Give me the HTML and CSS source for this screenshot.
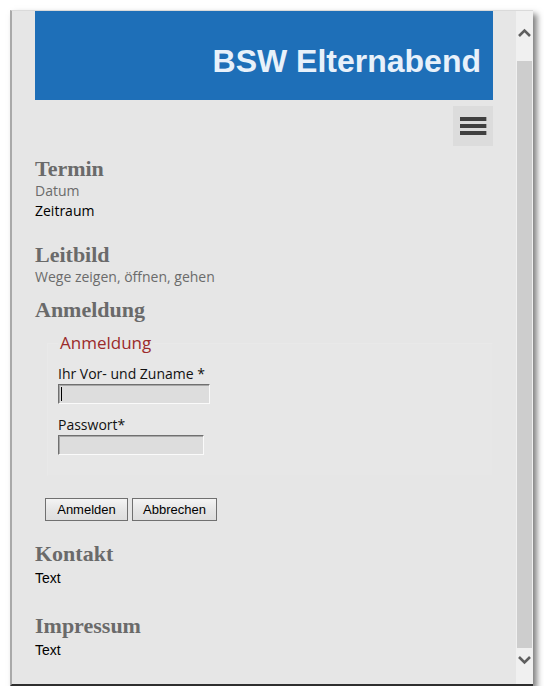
FILE: index.html
```html
<!DOCTYPE html>
<html lang="de">

<head>
    <meta charset="UTF-8">
    <meta name="viewport" content="width=device-width, initial-scale=1.0">
    <title>BSW Elternabend</title>
    <link rel="stylesheet" href="styles.css">
</head>

<body>
    <div class="window">
        <div class="viewport">
            <!-- Kopfbereich -->
            <header class="banner">
                <h1>BSW Elternabend</h1>
            </header>
            <div class="menu-row">
                <button class="menu-btn" aria-label="Menü"><span></span><span></span><span></span></button>
            </div>

            <section class="termin">
                <h2>Termin</h2>
                <p class="muted">Datum</p>
                <p>Zeitraum</p>
            </section>

            <section class="leitbild">
                <h2>Leitbild</h2>
                <p class="muted">Wege zeigen, öffnen, gehen</p>
            </section>

            <!-- Anmeldung -->
            <section class="anmeldung">
                <h2>Anmeldung</h2>
                <form class="login-form" onsubmit="return false">
                    <fieldset>
                        <legend>Anmeldung</legend>
                        <label for="name">Ihr Vor- und Zuname *</label>
                        <span class="field">
                            <input type="text" id="name" class="wide">
                            <i class="caret"></i>
                        </span>
                        <label for="pass" class="second">Passwort*</label>
                        <input type="password" id="pass" class="narrow">
                    </fieldset>
                    <div class="actions">
                        <button type="submit" class="btn btn-login">Anmelden</button>
                        <button type="reset" class="btn btn-cancel">Abbrechen</button>
                    </div>
                </form>
            </section>

            <section class="kontakt">
                <h2>Kontakt</h2>
                <p class="plain">Text</p>
            </section>

            <section class="impressum">
                <h2>Impressum</h2>
                <p class="plain">Text</p>
            </section>
        </div>

        <!-- Scrollleiste -->
        <div class="scrollbar">
            <div class="sb-btn">
                <svg width="17" height="17" viewBox="0 0 17 17"><path d="M3 12 L8.5 6.5 L14 12" fill="none" stroke="#5f5f5f" stroke-width="2.6"/></svg>
            </div>
            <div class="sb-thumb"></div>
            <div class="sb-btn sb-down">
                <svg width="17" height="17" viewBox="0 0 17 17"><path d="M3 5 L8.5 10.5 L14 5" fill="none" stroke="#5f5f5f" stroke-width="2.6"/></svg>
            </div>
        </div>
    </div>
</body>

</html>
```

FILE: styles.css
```css
body {
    margin: 0;
    background-color: #fff;
    font-family: "Open Sans", sans-serif;
}

.window {
    display: flex;
    width: 521px;
    height: 673px;
    margin: 10px 0 0 10px;
    border-left: 2px solid #a9a9a9;
    border-top: 1px solid #dadada;
    border-bottom: 2px solid #2e2e2e;
    box-shadow: 4px 4px 6px rgba(0, 0, 0, 0.5);
}

.viewport {
    flex: 1;
    overflow: hidden;
    background-color: #e6e6e6;
    padding: 0 23px;
}

.banner {
    height: 89px;
    box-sizing: border-box;
    background-color: #1e6fb8;
    padding: 32px 12px 0;
    text-align: right;
}

.banner h1 {
    margin: 0;
    font-family: "Liberation Sans", Arial, sans-serif;
    font-size: 32px;
    line-height: 36px;
    font-weight: bold;
    color: #e8f1fa;
}

.menu-row {
    display: flex;
    justify-content: flex-end;
    margin-top: 6px;
}

.menu-btn {
    width: 40px;
    height: 40px;
    padding: 0;
    border: none;
    background-color: #dcdcdc;
    display: flex;
    flex-direction: column;
    align-items: center;
    justify-content: center;
    gap: 3px;
}

.menu-btn span {
    display: block;
    width: 26px;
    height: 4px;
    background-color: #404040;
    box-shadow: 1px 0 0 #a5a5a5;
}

h2 {
    margin: 0;
    font-family: "Liberation Serif", "Times New Roman", serif;
    font-size: 22px;
    line-height: 24px;
    font-weight: bold;
    color: #6a6a6a;
}

p {
    margin: 0;
    font-size: 14px;
    line-height: 20px;
    color: #000;
}

p.muted {
    color: #6b6b6b;
}

p.plain {
    font-family: "Liberation Sans", Arial, sans-serif;
    line-height: 24px;
}

.termin {
    margin-top: 11px;
}

.leitbild {
    margin-top: 22px;
}

.anmeldung {
    margin-top: 11px;
}

.login-form {
    margin: 9px 0 0 10px;
}

fieldset {
    margin: 0 0 0 2px;
    padding: 9px 0 20px 10px;
    border: 1px solid #e9e9e9;
    border-right-color: #e6e6e6;
    border-bottom-color: #e6e6e6;
    background-color: #e7e7e7;
}

legend {
    padding: 0 2px;
    font-size: 17px;
    line-height: 24px;
    color: #9b2b2b;
}

fieldset label {
    display: block;
    font-size: 14px;
    line-height: 20px;
    color: #111;
}

fieldset label.second {
    margin-top: 11px;
}

.field {
    position: relative;
    display: block;
}

input {
    display: block;
    box-sizing: border-box;
    height: 20px;
    margin: 0;
    padding: 0 2px;
    border: 1px solid;
    border-color: #707070 #fafafa #fafafa #707070;
    box-shadow: inset 1px 1px 0 #a8a8a8;
    background-color: #dddddd;
    outline: none;
}

input.wide {
    width: 152px;
}

input.narrow {
    width: 146px;
}

.caret {
    position: absolute;
    left: 3px;
    top: 3px;
    width: 1px;
    height: 14px;
    background-color: #000;
}

.actions {
    display: flex;
    gap: 4px;
    margin-top: 22px;
}

.btn {
    height: 23px;
    padding: 0;
    border: 1px solid #707070;
    background: linear-gradient(#f4f4f4, #e6e6e6 50%, #dedede);
    font-family: "Liberation Sans", Arial, sans-serif;
    font-size: 13px;
    color: #000;
}

.btn-login {
    width: 83px;
}

.btn-cancel {
    width: 85px;
}

.kontakt {
    margin-top: 21px;
}

.impressum {
    margin-top: 24px;
}

.scrollbar {
    width: 17px;
    display: flex;
    flex-direction: column;
    background-color: #f0f0f0;
}

.sb-btn {
    height: 17px;
    margin-top: 13px;
}

.sb-btn svg {
    display: block;
}

.sb-thumb {
    flex: 1;
    margin: 20px 1px 0;
    background-color: #cdcdcd;
}

.sb-down {
    margin: 4px 0 15px;
}
```
